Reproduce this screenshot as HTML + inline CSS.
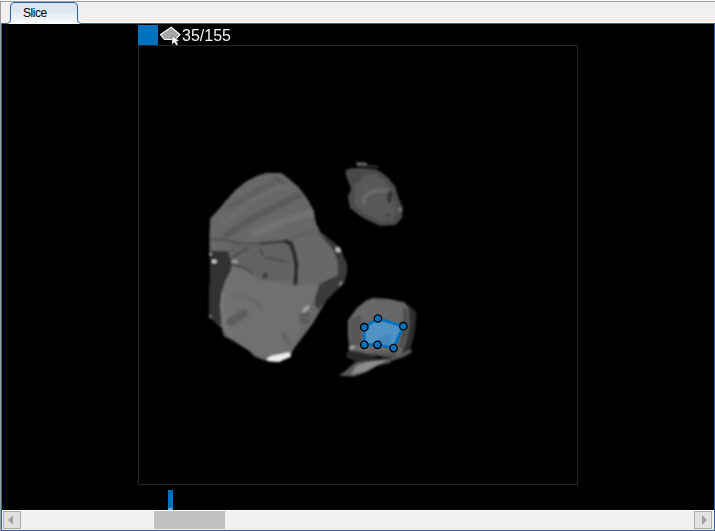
<!DOCTYPE html>
<html><head><meta charset="utf-8"><title>Slice</title>
<style>
html,body{margin:0;padding:0;background:#f0f0f0;overflow:hidden}
body{width:715px;height:531px;position:relative;font-family:"Liberation Sans",sans-serif}
#root{position:absolute;left:0;top:0;width:715px;height:531px;background:#f0f0f0;overflow:hidden}
.abs{position:absolute}
#topw{left:0;top:0;width:715px;height:1px;background:#f7f7f7}
#topg{left:0;top:1px;width:715px;height:1px;background:#a0a0a0}
#leftg{left:0;top:1px;width:1px;height:530px;background:#a0a0a0}
#wline{left:1px;top:22px;width:714px;height:1px;background:#fafaf7}
#panel{left:1px;top:23px;width:712px;height:506px;border:1px solid #2e62a0;background:#000}
#tab{left:0;top:0}
#tabtxt{left:23px;top:6px;font-size:12px;line-height:15px;letter-spacing:-0.45px;color:#000}
#sq{left:138px;top:25px;width:20px;height:20px;background:#0072bd}
#cnt{left:182px;top:27px;will-change:transform;font-size:16px;line-height:18px;color:#f2f2f2}
#sbw{left:2px;top:510px;width:712px;height:1px;background:#fff}
#sb{left:2px;top:511px;width:712px;height:19px;background:#f0f0f0}
.btn{top:511px;width:16px;height:16px;background:#e1e1e1;border:1px solid #adadad}
#thumb{left:154px;top:511px;width:71px;height:18px;background:#c1c1c1}
#bar{left:168px;top:490px;width:5px;height:18px;background:#0072bd}
#bar2{left:168px;top:508px;width:5px;height:2px;background:#4da3dc}
</style></head><body><div id="root">
<div class="abs" id="topw"></div><div class="abs" id="topg"></div><div class="abs" id="leftg"></div>
<div class="abs" id="wline"></div>
<div class="abs" id="panel"></div>
<svg class="abs" id="tab" width="100" height="26" viewBox="0 0 100 26">
<defs><linearGradient id="tg" x1="0" y1="0" x2="0" y2="1"><stop offset="0" stop-color="#dce6f0"/><stop offset="0.45" stop-color="#dfe8f2"/><stop offset="1" stop-color="#ffffff"/></linearGradient></defs>
<path d="M1.5,24 L1.5,23.5 L6,23.5 Q10.5,23.5 10.5,19 L10.5,7 Q10.5,2.5 15,2.5 L73,2.5 Q77.5,2.5 77.5,7 L77.5,19 Q77.5,23.5 82,23.5 L100,23.5 L100,24 Z" fill="url(#tg)" stroke="none"/>
<path d="M1.5,23.5 L6,23.5 Q10.5,23.5 10.5,19 L10.5,7 Q10.5,2.5 15,2.5 L73,2.5 Q77.5,2.5 77.5,7 L77.5,19 Q77.5,23.5 82,23.5 L100,23.5" fill="none" stroke="#2e62a0" stroke-width="1"/>
</svg>
<div class="abs" id="tabtxt">Slice</div>
<div class="abs" id="sq"></div>
<div class="abs" id="cnt">35/155</div>
<svg class="abs" id="img" style="left:0;top:0" width="715" height="531" viewBox="0 0 715 531">
<defs>
<filter id="bl" x="-5%" y="-5%" width="110%" height="110%"><feGaussianBlur stdDeviation="0.95"/></filter>
<filter id="bl2" x="-20%" y="-20%" width="140%" height="140%"><feGaussianBlur stdDeviation="1.2"/></filter>
<clipPath id="cpA"><path id="pA" d="M265.5,173 L281,173 L285.5,176 L298.5,187 L307.5,199 L313.5,210.5 L315.8,222.5 L320.5,232.5 L331,240.5 L340,248 L343.8,258 L347,264 L346.6,274 L343.5,283 L335.6,291 L326.5,300 L319.5,312 L313,323 L305,334 L297,344.5 L292.5,351 L290.5,357 L279,362 L266,361 L254.5,356.5 L250,351.4 L239.6,344.8 L231.6,339.8 L224,336.3 L221.8,328 L216,323 L209.5,317.5 L209.3,300 L210,277.6 L210,261.8 L209.5,253 L209.5,232.8 L210.3,218.5 L218.6,209.5 L226,200.5 L235.5,190 L246,181.5 L257,176 L266,173 Z"/></clipPath>
</defs>
<rect x="138.5" y="45.5" width="439" height="439" fill="none" stroke="#262626" stroke-width="1"/>
<!-- header icon -->
<polygon points="160.5,34.5 171.3,27.3 180,34.5 175.6,39.5 164.5,39.5" fill="#a6a6a6" stroke="#fff" stroke-width="1.1" stroke-linejoin="miter"/>
<path d="M172,36 L172,44.5 L174.4,42.4 L176.3,45.4 L178.1,44.3 L176.3,41.5 L179.2,40.8 Z" fill="#fff" stroke="#444" stroke-width="0.5"/>
<!-- large blob -->
<g filter="url(#bl)">
<path d="M265.5,173 L281,173 L285.5,176 L298.5,187 L307.5,199 L313.5,210.5 L315.8,222.5 L320.5,232.5 L331,240.5 L340,248 L343.8,258 L347,264 L346.6,274 L343.5,283 L335.6,291 L326.5,300 L319.5,312 L313,323 L305,334 L297,344.5 L292.5,351 L290.5,357 L279,362 L266,361 L254.5,356.5 L250,351.4 L239.6,344.8 L231.6,339.8 L224,336.3 L221.8,328 L216,323 L209.5,317.5 L209.3,300 L210,277.6 L210,261.8 L209.5,253 L209.5,232.8 L210.3,218.5 L218.6,209.5 L226,200.5 L235.5,190 L246,181.5 L257,176 L266,173 Z" fill="#676767"/>
<g clip-path="url(#cpA)">
<!-- lower lobe base -->
<path d="M229,253 L260,280 L296,285 L320,284 L314,300 L292,350 L277,361 L254,354 L229,338 L218,320 L221,295 Z" fill="#707070" filter="url(#bl2)"/>
<!-- upper lobe streaks -->
<g filter="url(#bl2)" fill="none" stroke-linecap="round">
<path d="M226,235 L255,217 L300,195" stroke="#5a5a5a" stroke-width="6"/>
<path d="M222,223 L250,203 L284,186" stroke="#6d6d6d" stroke-width="5"/>
<path d="M228,207 L252,194 L272,183" stroke="#5e5e5e" stroke-width="4"/>
<path d="M254,234 L284,221 L314,212" stroke="#717171" stroke-width="9"/>
<path d="M275,179 L284,183" stroke="#525252" stroke-width="3"/>
<path d="M292,238 L314,230" stroke="#606060" stroke-width="3"/>
<!-- lower lobe features -->
<path d="M223,292 L221.5,306 L225,325 L232,336" stroke="#7a7a7a" stroke-width="3"/>
<path d="M230,322 L237,318 L244,313" stroke="#5b5b5b" stroke-width="7.5"/>
<path d="M234,296 L246,297 L256,301 L262,310" stroke="#646464" stroke-width="2.2"/>
<path d="M284,334 L287,343" stroke="#626262" stroke-width="5"/>
</g>
<!-- left dark region -->
<path d="M208,251 L228,251 L232,262 L231,270 L225,281.5 L221,295 L220,306 L221.5,326 L215,322.5 L208,318 Z" fill="#303030"/>
<!-- middle textured region slightly darker -->
<path d="M228,243 L288,241 L292,262 L290,280 L262,280 L246,270 L232,266 Z" fill="#626262"/>
<!-- horizontal boundary line -->
<path d="M209,239 L222,239.5 L240,243 L262,243.5 L288,240.5" fill="none" stroke="#505050" stroke-width="2.2"/>
<path d="M260,243.5 L288,241" fill="none" stroke="#3c3c3c" stroke-width="2.5"/>
<!-- dark vertical curve -->
<path d="M285.5,241.5 L291,243.5 L294.5,255 L296.3,265 L295.5,283" fill="none" stroke="#2b2b2b" stroke-width="4.3" stroke-linejoin="round" stroke-linecap="round"/>
<!-- internal lines -->
<path d="M232,257.5 L249,247.6" fill="none" stroke="#484848" stroke-width="2"/>
<path d="M232,264.5 L246,268.8 L253,274" fill="none" stroke="#484848" stroke-width="2"/>
<path d="M260.5,249 L263,256" fill="none" stroke="#4a4a4a" stroke-width="2"/>
<path d="M266,257.5 L286,261.7" fill="none" stroke="#505050" stroke-width="2"/>
<rect x="263" y="273" width="4.5" height="5.5" fill="#3a3a3a"/>
<!-- right dark band -->
<path d="M316,232 L331,239.5 L341,247 L346,258 L350,266 L346,276 L338,275 L337.7,261 L332.5,249 L322,237 Z" fill="#3a3a3a"/>
<path d="M319.8,284 L337.7,275 L347,273 L343,283 L336,291 L325,302 L318,310 L314.4,304 L315.3,296.6 Z" fill="#3a3a3a"/>
<!-- bright spots -->
<rect x="335.9" y="247.4" width="6" height="4.4" fill="#c4c4c4"/>
<rect x="339.5" y="282" width="3" height="5.5" fill="#8c8c8c"/>
<rect x="347" y="265" width="3" height="5" fill="#707070"/>
<path d="M299,314 L309,312 L309,324 L300,324 Z" fill="#5c5c5c"/>
<path d="M301.3,311.5 L306,306 L309.8,305.3 L308.8,309 L303.2,313 Z" fill="#a2a2a2"/>
<rect x="208.5" y="253" width="2.8" height="2.5" fill="#c8c8c8"/>
<rect x="212" y="260" width="4.5" height="3" fill="#d0d0d0"/>
<rect x="232" y="260" width="6" height="3" fill="#9a9a9a"/>
<!-- bottom bright -->
<path d="M267,358.3 L272,355.8 L289.5,352.3 L291,356.8 L279.5,362 L268.5,362 Z" fill="#ececec"/>
<rect x="208.4" y="315" width="2.4" height="3" fill="#9a9a9a"/>
</g>
</g>
<!-- top-right blob -->
<g filter="url(#bl2)">
<path d="M345.5,170.5 L350,168.5 L362,168 L376,169.5 L381,172 L387.7,177.6 L395.3,186.6 L398.3,197.2 L402.8,207.7 L401.8,218.3 L395.3,225 L380.2,225.8 L369.7,221.3 L359,215.3 L350,207.7 L347.8,195.7 L351.2,189.7 L348.6,182 L345.8,175 Z" fill="#4b4b4b"/>
<path d="M356,162 L366.5,162.5 L367,166.5 L357,166 Z" fill="#5e5e5e"/>
<path d="M367,164.5 L378.5,165.5 L378.5,168 L367,167.5 Z" fill="#2c2c2c"/>
<path d="M356,176 L376,174 L390,186 L396,204 L394,219 L380,221 L364,213 L354,203 L355,190 Z" fill="#595959"/>
<path d="M349,172 L360,171 L362,180 L354,186 Z" fill="#474747"/>
<path d="M363.5,202 L365,196.5 L371,192 L378,190.5 L386,190.5" fill="none" stroke="#6c6c6c" stroke-width="3.4" stroke-linecap="round"/>
<path d="M371,192 L364,185" fill="none" stroke="#5f5f5f" stroke-width="2.4"/>
<path d="M390,193.5 L389.5,200.5" fill="none" stroke="#343434" stroke-width="4.6" stroke-linecap="round"/>
<rect x="386" y="213.5" width="3.2" height="3.2" fill="#3c3c3c"/>
<rect x="398" y="207.5" width="4" height="4.5" fill="#6e6e6e"/>
</g>
<!-- bottom-right blob -->
<g filter="url(#bl2)">
<path d="M407,304 L416.5,312 L415,331 L411,347 L404,355 L398,352 L400,350 L406,330 Z" fill="#2e2e2e"/>
<path d="M347,351 L372,353.5 L378,358 L358,362 L346,357.5 Z" fill="#2c2c2c"/>
<path d="M404,352 L411,349 L412,352 L404,357 L391,361 L389,358 Z" fill="#585858"/>
<path d="M355,362.5 L376.5,359.5 L389.5,358 L391,362.5 L376.5,366 L366.5,372 L354,376.5 L339,375.5 L346,370.5 Z" fill="#5a5a5a"/>
<path d="M356,366 L366,362 L377,361 L387,360 L377,365.5 L365,371.5 L351,375 Z" fill="#8c8c8c"/>
<path d="M373,298 L389,299 L405,302.5 L408.7,309.7 L409.5,325 L407,338 L403,350 L399,356 L385,357 L372.8,354.5 L357.6,351.8 L349.7,350.8 L347.9,334.7 L347.9,320.4 L356.8,307.9 L365.8,300.7 Z" fill="#686868"/>
<path d="M403,306 L408,311 L408.5,326 L406,338 L402,349 L399,346 L403,326 Z" fill="#4e4e4e"/>
<path d="M372,351.5 L398,352 L396,356.5 L384,356.5 L372,354.5 Z" fill="#565656"/>
<path d="M350,320 L361,314 L361.5,345 L350.5,346 Z" fill="#555555"/>
<path d="M349,348.5 L354.5,346.5" fill="none" stroke="#a8a8a8" stroke-width="2.4"/>
</g>
<!-- ROI polygon -->
<polygon points="377.9,318.5 403.3,326.2 393.6,348.1 377.5,344.8 364.3,344.8 364.3,327.2" fill="#4f98d2" fill-opacity="0.88"/>
<path d="M378,338 L392,334 L390,345 L379,343 Z" fill="#3a82c0" fill-opacity="0.7" filter="url(#bl2)"/>
<polygon points="377.9,318.5 403.3,326.2 393.6,348.1 377.5,344.8 364.3,344.8 364.3,327.2" fill="none" stroke="#0072bd" stroke-width="3" stroke-linejoin="round"/>
<g fill="#0072bd" stroke="#000" stroke-width="1.3">
<circle cx="377.9" cy="318.5" r="3.7"/><circle cx="403.3" cy="326.2" r="3.7"/><circle cx="393.6" cy="348.1" r="3.7"/>
<circle cx="377.5" cy="344.8" r="3.7"/><circle cx="364.3" cy="344.8" r="3.7"/><circle cx="364.3" cy="327.2" r="3.7"/>
</g>
</svg>
<div class="abs" id="bar"></div><div class="abs" id="bar2"></div>
<div class="abs" id="sbw"></div><div class="abs" id="sb"></div>
<div class="abs" id="thumb"></div>
<div class="abs btn" style="left:3px"></div>
<div class="abs btn" style="left:694px"></div>
<svg class="abs" style="left:0;top:505px" width="715" height="26" viewBox="0 505 715 26">
<path d="M8,520 L13,515 L13,525 Z" fill="#a0a0a0"/>
<path d="M707,520 L702,515 L702,525 Z" fill="#a0a0a0"/>
</svg>
</div></body></html>
